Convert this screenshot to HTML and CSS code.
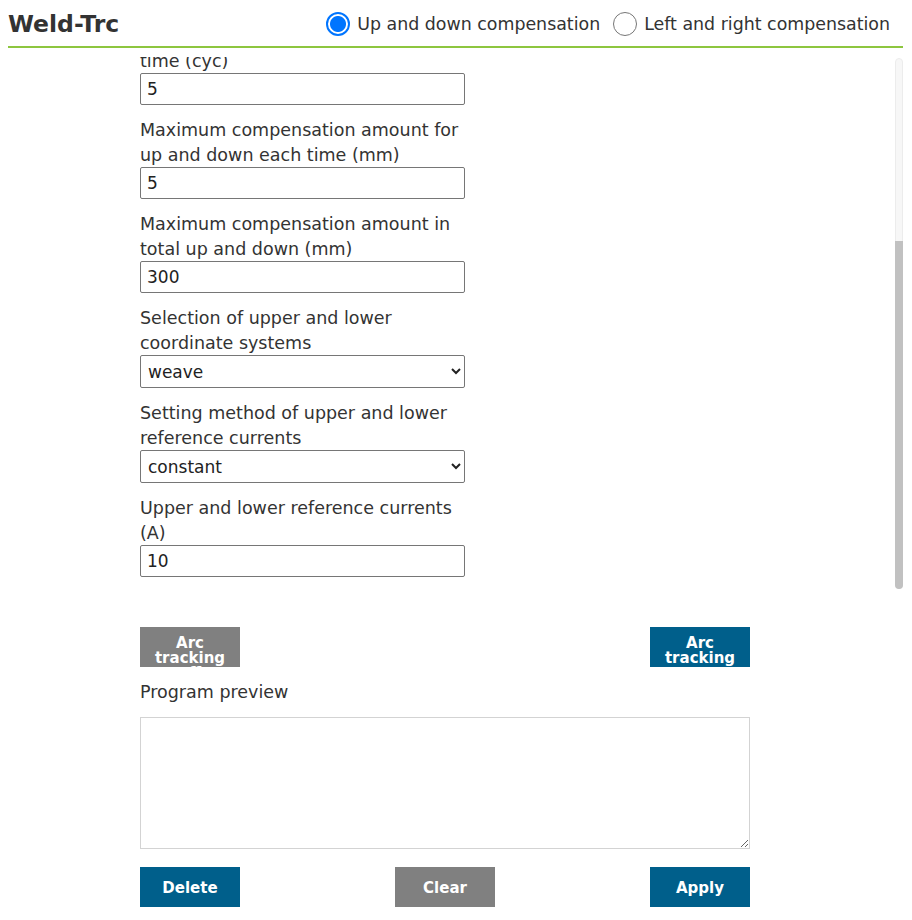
FILE: index.html
```html
<!DOCTYPE html>
<html>
<head>
<meta charset="utf-8">
<link rel="stylesheet" href="styles.css">
</head>
<body>
<div class="page">
  <header class="header">
    <h1 class="title">Weld-Trc</h1>
    <div class="modes">
      <label class="mode"><input type="radio" name="mode" class="radio" checked><span>Up and down compensation</span></label>
      <label class="mode"><input type="radio" name="mode" class="radio"><span>Left and right compensation</span></label>
    </div>
  </header>
  <div class="scroll-wrap">
    <div class="scroller" id="scroller">
      <div class="form">
        <div class="field">
          <label class="label">Up and down tracking start delay time (cyc)</label>
          <input class="input" type="text" value="10">
        </div>
        <div class="field">
          <label class="label">Up and down compensation gain coefficient</label>
          <input class="input" type="text" value="1">
        </div>
        <div class="field">
          <label class="label">Up and down compensation interval time (cyc)</label>
          <input class="input" type="text" value="5">
        </div>
        <div class="field">
          <label class="label">Maximum compensation amount for up and down each time (mm)</label>
          <input class="input" type="text" value="5">
        </div>
        <div class="field">
          <label class="label">Maximum compensation amount in total up and down (mm)</label>
          <input class="input" type="text" value="300">
        </div>
        <div class="field">
          <label class="label">Selection of upper and lower coordinate systems</label>
          <select class="select"><option>weave</option><option>tool</option></select>
        </div>
        <div class="field">
          <label class="label">Setting method of upper and lower reference currents</label>
          <select class="select"><option>constant</option><option>sampling</option></select>
        </div>
        <div class="field">
          <label class="label">Upper and lower reference currents (A)</label>
          <input class="input" type="text" value="10">
        </div>
      </div>
    </div>
    <div class="scrollbar" id="scrollbar"><div class="thumb" id="thumb"></div></div>
  </div>
  <div class="bottom">
    <div class="btn-row arc-row">
      <button class="btn btn-arc btn-grey">Arc tracking off</button>
      <button class="btn btn-arc btn-blue">Arc tracking on</button>
    </div>
    <div class="preview-label">Program preview</div>
    <textarea class="preview"></textarea>
    <div class="btn-row action-row">
      <button class="btn btn-action btn-blue">Delete</button>
      <button class="btn btn-action btn-grey">Clear</button>
      <button class="btn btn-action btn-blue">Apply</button>
    </div>
  </div>
</div>
<script src="script.js"></script>
</body>
</html>
```
FILE: styles.css
```css
* { box-sizing: border-box; }
html, body { margin: 0; padding: 0; background: #fff; }
body {
  font-family: "DejaVu Sans", Verdana, sans-serif;
  color: #333;
  overflow: hidden;
}
.page {
  width: 895px;
  margin-left: 8px;
}
.header {
  display: flex;
  align-items: center;
  justify-content: space-between;
  height: 48px;
  border-bottom: 2px solid #8dc63f;
  padding-top: 2px;
  padding-right: 13px;
}
.title {
  margin: 0;
  font-size: 23.5px;
  font-weight: bold;
  color: #333;
}
.modes {
  display: flex;
  gap: 13px;
  font-size: 17.4px;
}
.mode {
  display: flex;
  align-items: center;
  gap: 7px;
  color: #333;
}
.radio {
  appearance: none;
  -webkit-appearance: none;
  margin: 0;
  width: 24px;
  height: 24px;
  border: 1.5px solid #767676;
  border-radius: 50%;
  background: #fff;
}
.radio:checked {
  border: 2px solid #0075ff;
  background: radial-gradient(circle, #0075ff 0 7.5px, #fff 8.5px);
}
.scroll-wrap {
  position: relative;
  margin-top: 9px;
}
.scroller {
  height: 536px;
  overflow-y: auto;
  scrollbar-width: none;
}
.scroller::-webkit-scrollbar { display: none; }
.scrollbar {
  position: absolute;
  right: 0;
  top: 1px;
  bottom: 4px;
  width: 8px;
  background: #f7f7f7;
  border: 1px solid #ececec;
  border-radius: 4px;
}
.thumb {
  position: absolute;
  left: -1px;
  right: -1px;
  background: #c1c1c1;
  border-radius: 0 0 4px 4px;
}
.form {
  margin-left: 132px;
  width: 325px;
  padding: 60px 0 16px;
  display: flex;
  flex-direction: column;
  gap: 12px;
}
.field {
  display: flex;
  flex-direction: column;
}
.label {
  font-size: 17.5px;
  line-height: 25px;
  color: #333;
  padding-top: 1px;
  margin-bottom: -1px;
}
.input, .select {
  height: 32px;
  width: 325px;
  border: 1px solid #767676;
  border-radius: 2px;
  font-family: "DejaVu Sans", Verdana, sans-serif;
  font-size: 17px;
  color: #222;
  padding: 0 6px;
  background: #fff;
}
.select { height: 33px; padding-left: 3px; }
.bottom {
  margin-left: 132px;
  width: 610px;
  padding-top: 34px;
}
.btn-row {
  display: flex;
  justify-content: space-between;
}
.btn {
  width: 100px;
  height: 40px;
  border: none;
  color: #fff;
  font-family: "DejaVu Sans", Verdana, sans-serif;
  font-weight: bold;
  font-size: 15px;
  cursor: pointer;
}
.btn-arc {
  line-height: 15px;
  padding: 9px 4px 0;
  overflow: hidden;
  display: block;
  text-align: center;
  white-space: normal;
}
.btn-action { padding-top: 3px; }
.btn-grey { background: #808080; }
.btn-blue { background: #005f8b; }
.preview-label {
  font-size: 17.5px;
  line-height: 25px;
  margin-top: 13px;
}
.preview {
  display: block;
  width: 610px;
  height: 132px;
  margin-top: 12px;
  border: 1px solid #d3d3d3;
  resize: vertical;
}
.action-row { margin-top: 18px; }
```
FILE: script.js
```js
var s = document.getElementById('scroller');
s.scrollTop = s.scrollHeight;
var bar = document.getElementById('scrollbar');
var thumb = document.getElementById('thumb');
var track = bar.clientHeight + 2;
var h = Math.round(track * s.clientHeight / s.scrollHeight);
var t = Math.round((track - h) * s.scrollTop / (s.scrollHeight - s.clientHeight));
thumb.style.height = h + 'px';
thumb.style.top = (t - 1) + 'px';
```
